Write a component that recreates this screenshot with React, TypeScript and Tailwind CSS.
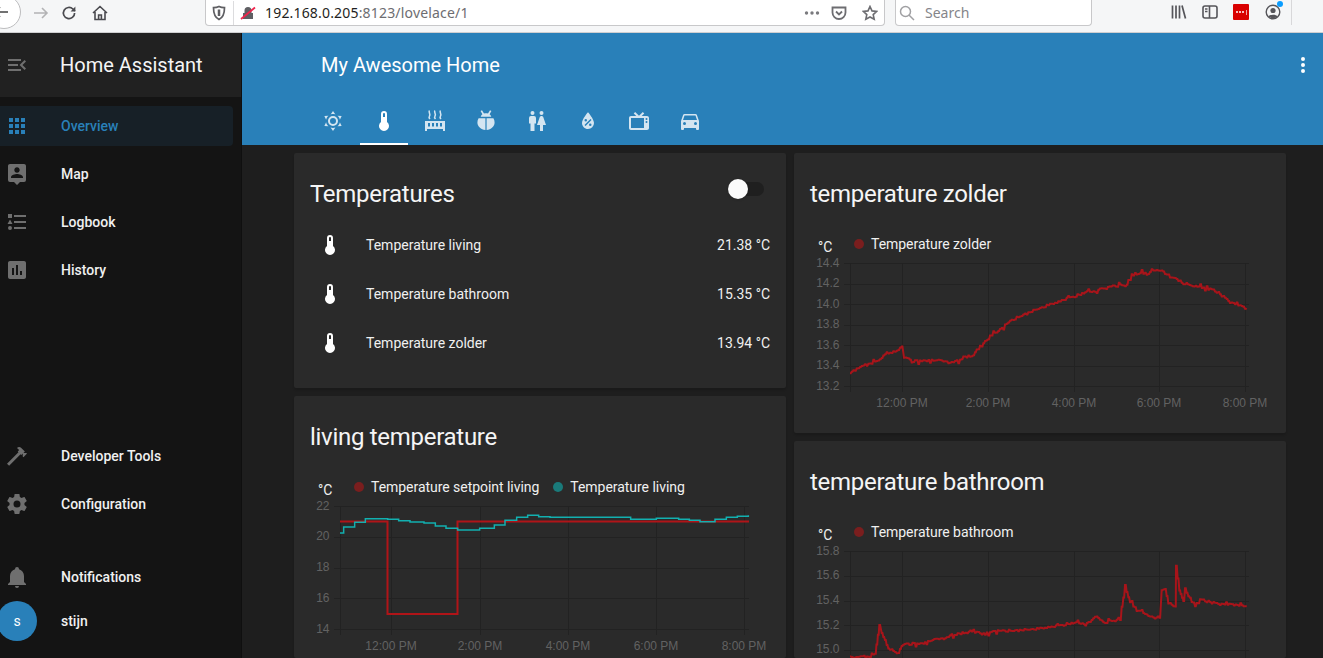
import React from 'react';

/* ======================
   アイコン (mdi paths)
====================== */
const P = {
  menuOpen: 'M21,15.61L19.59,17L14.58,12L19.59,7L21,8.39L17.44,12L21,15.61M3,6H16V8H3V6M3,13V11H13V13H3M3,18V16H16V18H3Z',
  apps: 'M16,20H20V16H16M16,14H20V10H16M10,8H14V4H10M16,8H20V4H16M10,14H14V10H10M4,14H8V10H4M4,20H8V16H4M10,20H14V16H10M4,8H8V4H4V8Z',
  map: 'M19,2H5C3.89,2 3,2.89 3,4V18A2,2 0 0,0 5,20H9L12,23L15,20H19A2,2 0 0,0 21,18V4C21,2.89 20.1,2 19,2M18,16H6V15.1C6,13.1 10,12 12,12C14,12 18,13.1 18,15.1M12,5.3C13.5,5.3 14.7,6.5 14.7,8C14.7,9.5 13.5,10.7 12,10.7C10.5,10.7 9.3,9.5 9.3,8C9.3,6.5 10.5,5.3 12,5.3Z',
  logbook: 'M5,9.5L7.5,14H2.5L5,9.5M3,4H7V8H3V4M5,20A2,2 0 0,0 7,18A2,2 0 0,0 5,16A2,2 0 0,0 3,18A2,2 0 0,0 5,20M9,5V7H21V5H9M9,19H21V17H9V19M9,13H21V11H9V13Z',
  history: 'M19 3H5C3.9 3 3 3.9 3 5V19C3 20.1 3.9 21 5 21H19C20.1 21 21 20.1 21 19V5C21 3.9 20.1 3 19 3M9 17H7V10H9V17M13 17H11V7H13V17M17 17H15V13H17V17Z',
  hammer: 'M2 19.63L13.43 8.2L12.72 7.5L14.14 6.07L12 3.89C13.2 2.7 15.09 2.7 16.27 3.89L19.87 7.5L18.45 8.91H21.29L22 9.62L18.45 13.21L17.74 12.5V9.62L16.27 11.04L15.56 10.33L4.13 21.76L2 19.63Z',
  cog: 'M12,15.5A3.5,3.5 0 0,1 8.5,12A3.5,3.5 0 0,1 12,8.5A3.5,3.5 0 0,1 15.5,12A3.5,3.5 0 0,1 12,15.5M19.43,12.97C19.47,12.65 19.5,12.33 19.5,12C19.5,11.67 19.47,11.34 19.43,11L21.54,9.37C21.73,9.22 21.78,8.95 21.66,8.73L19.66,5.27C19.54,5.05 19.27,4.96 19.05,5.05L16.56,6.05C16.04,5.66 15.5,5.32 14.87,5.07L14.5,2.42C14.46,2.18 14.25,2 14,2H10C9.75,2 9.54,2.18 9.5,2.42L9.13,5.07C8.5,5.32 7.96,5.66 7.44,6.05L4.95,5.05C4.73,4.96 4.46,5.05 4.34,5.27L2.34,8.73C2.21,8.95 2.27,9.22 2.46,9.37L4.57,11C4.53,11.34 4.5,11.67 4.5,12C4.5,12.33 4.53,12.65 4.57,12.97L2.46,14.63C2.27,14.78 2.21,15.05 2.34,15.27L4.34,18.73C4.46,18.95 4.73,19.03 4.95,18.95L7.44,17.94C7.96,18.34 8.5,18.68 9.13,18.93L9.5,21.58C9.54,21.82 9.75,22 10,22H14C14.25,22 14.46,21.82 14.5,21.58L14.87,18.93C15.5,18.67 16.04,18.34 16.56,17.94L19.05,18.95C19.27,19.03 19.54,18.95 19.66,18.73L21.66,15.27C21.78,15.05 21.73,14.78 21.54,14.63L19.43,12.97Z',
  bell: 'M21,19V20H3V19L5,17V11C5,7.9 7.03,5.17 10,4.29C10,4.19 10,4.1 10,4A2,2 0 0,1 12,2A2,2 0 0,1 14,4C14,4.1 14,4.19 14,4.29C16.97,5.17 19,7.9 19,11V17L21,19M14,21A2,2 0 0,1 12,23A2,2 0 0,1 10,21',
  dots: 'M12,16A2,2 0 0,1 14,18A2,2 0 0,1 12,20A2,2 0 0,1 10,18A2,2 0 0,1 12,16M12,10A2,2 0 0,1 14,12A2,2 0 0,1 12,14A2,2 0 0,1 10,12A2,2 0 0,1 12,10M12,4A2,2 0 0,1 14,6A2,2 0 0,1 12,8A2,2 0 0,1 10,6A2,2 0 0,1 12,4Z',
  sunny: 'M12,7A5,5 0 0,1 17,12A5,5 0 0,1 12,17A5,5 0 0,1 7,12A5,5 0 0,1 12,7M12,9A3,3 0 0,0 9,12A3,3 0 0,0 12,15A3,3 0 0,0 15,12A3,3 0 0,0 12,9M12,2L14.39,5.42C13.65,5.15 12.84,5 12,5C11.16,5 10.35,5.15 9.61,5.42L12,2M3.34,7L7.5,6.65C6.9,7.16 6.36,7.78 5.94,8.5C5.5,9.24 5.25,10 5.11,10.79L3.34,7M3.36,17L5.12,13.23C5.26,14 5.53,14.78 5.95,15.5C6.37,16.24 6.91,16.86 7.5,17.37L3.36,17M20.65,7L18.88,10.79C18.74,10 18.47,9.23 18.05,8.5C17.63,7.78 17.1,7.15 16.5,6.64L20.65,7M20.64,17L16.5,17.36C17.09,16.85 17.62,16.22 18.04,15.5C18.46,14.77 18.73,14 18.87,13.21L20.64,17M12,22L9.59,18.56C10.33,18.83 11.14,19 12,19C12.82,19 13.63,18.83 14.37,18.56L12,22Z',
  thermometer: 'M15 13V5A3 3 0 0 0 9 5V13A5 5 0 1 0 15 13M12 4A1 1 0 0 1 13 5V8H11V5A1 1 0 0 1 12 4Z',
  radiator: 'M2 12H22V22H20V20H4V22H2ZM5 14V17.5H7V14ZM9 14V17.5H11V14ZM13 14V17.5H15V14ZM17 14V17.5H19V14Z',
  ladybug: 'M6.6 2L8 1.2L10 4.6C10.6 4.4 11.3 4.3 12 4.3S13.4 4.4 14 4.6L16 1.2L17.4 2L15.6 5.2C16.4 5.8 17 6.7 17.3 7.8H6.7C7 6.7 7.6 5.8 8.4 5.2ZM11.4 9.2V21C7 20.7 3.4 17.6 3.4 13.6C3.4 12 3.8 10.5 4.6 9.2ZM12.6 9.2H19.4C20.2 10.5 20.6 12 20.6 13.6C20.6 17.6 17 20.7 12.6 21Z',
  people: 'M7.5,2A2,2 0 0,1 9.5,4A2,2 0 0,1 7.5,6A2,2 0 0,1 5.5,4A2,2 0 0,1 7.5,2M6,7H9A2,2 0 0,1 11,9V14.5H9.5V22H5.5V14.5H4V9A2,2 0 0,1 6,7M16.5,2A2,2 0 0,1 18.5,4A2,2 0 0,1 16.5,6A2,2 0 0,1 14.5,4A2,2 0 0,1 16.5,2M15,22V16H12L14.59,8.41C14.84,7.59 15.6,7 16.5,7C17.4,7 18.16,7.59 18.41,8.41L21,16H18V22H15Z',
  water: 'M12,3.25C12,3.25 6,10 6,14C6,17.32 8.69,20 12,20A6,6 0 0,0 18,14C18,10 12,3.25 12,3.25M14.47,9.97L15.53,11.03L9.53,17.03L8.47,15.97M9.75,10A1.25,1.25 0 0,1 11,11.25A1.25,1.25 0 0,1 9.75,12.5A1.25,1.25 0 0,1 8.5,11.25A1.25,1.25 0 0,1 9.75,10M14.25,14.5A1.25,1.25 0 0,1 15.5,15.75A1.25,1.25 0 0,1 14.25,17A1.25,1.25 0 0,1 13,15.75A1.25,1.25 0 0,1 14.25,14.5Z',
  tv: 'M8.16,3L6.75,4.41L9.34,7H4C2.89,7 2,7.89 2,9V19C2,20.11 2.89,21 4,21H20C21.11,21 22,20.11 22,19V9C22,7.89 21.11,7 20,7H14.66L17.25,4.41L15.84,3L12,6.84L8.16,3M4,9H17V19H4V9M19.5,9A1,1 0 0,1 20.5,10A1,1 0 0,1 19.5,11A1,1 0 0,1 18.5,10A1,1 0 0,1 19.5,9M19.5,12A1,1 0 0,1 20.5,13A1,1 0 0,1 19.5,14A1,1 0 0,1 18.5,13A1,1 0 0,1 19.5,12Z',
  car: 'M5,11L6.5,6.5H17.5L19,11M17.5,16A1.5,1.5 0 0,1 16,14.5A1.5,1.5 0 0,1 17.5,13A1.5,1.5 0 0,1 19,14.5A1.5,1.5 0 0,1 17.5,16M6.5,16A1.5,1.5 0 0,1 5,14.5A1.5,1.5 0 0,1 6.5,13A1.5,1.5 0 0,1 8,14.5A1.5,1.5 0 0,1 6.5,16M18.92,6C18.72,5.42 18.16,5 17.5,5H6.5C5.84,5 5.28,5.42 5.08,6L3,12V20A1,1 0 0,0 4,21H5A1,1 0 0,0 6,20V19H18V20A1,1 0 0,0 19,21H20A1,1 0 0,0 21,20V12L18.92,6Z',
};

const Icon: React.FC<{ d: string; className?: string }> = ({ d, className }) => (
  <svg viewBox="0 0 24 24" className={`h-6 w-6 shrink-0 ${className ?? ''}`} fill="currentColor">
    <path d={d} fillRule="evenodd" />
  </svg>
);

/* ======================
   ブラウザのツールバー
====================== */
const BrowserBar: React.FC = () => (
  <div className="flex h-[33px] shrink-0 items-start overflow-hidden border-b border-[#cfcfd1] bg-[#f5f6f7] font-['Noto_Sans',sans-serif]">
    <div className="-ml-[13px] -mt-[5px] flex h-[34px] w-[34px] shrink-0 items-center justify-center rounded-full border border-[#bdbdbf] bg-white">
      <svg viewBox="0 0 16 16" className="ml-[-7px] h-4 w-4" fill="none" stroke="#444" strokeWidth="1.6">
        <path d="M15 8H2M7 3L2 8l5 5" />
      </svg>
    </div>
    <div className="flex h-[25px] w-[34px] items-center justify-center pl-[6px]">
      <svg viewBox="0 0 16 16" className="h-4 w-4" fill="none" stroke="#b3b3b5" strokeWidth="1.6">
        <path d="M1 8h13M9 3l5 5-5 5" />
      </svg>
    </div>
    <div className="flex h-[25px] w-[28px] items-center justify-center">
      <svg viewBox="0 0 16 16" className="h-4 w-4" fill="none" stroke="#4a4a4f" strokeWidth="1.7">
        <path d="M13.6 8a5.6 5.6 0 1 1-1.7-4L14 6" />
        <path d="M14.4 1.6V6.4H9.6" fill="#4a4a4f" stroke="none" />
      </svg>
    </div>
    <div className="flex h-[25px] w-[34px] items-center justify-center">
      <svg viewBox="0 0 16 16" className="h-4 w-4" fill="none" stroke="#4a4a4f" strokeWidth="1.6">
        <path d="M1 8l7-6.5L15 8M3 7v7.5h10V7M6.6 14.5V10h2.8v4.5" />
      </svg>
    </div>
    {/* URL欄 */}
    <div className="ml-[88px] flex h-[26px] w-[680px] shrink-0 items-center rounded-b-[4px] border border-t-0 border-[#c8c8ca] bg-white">
      <svg viewBox="0 0 16 16" className="ml-[5px] h-4 w-4" fill="none" stroke="#5f5f63" strokeWidth="1.7">
        <path d="M8 1.5c2 1 4 1.2 5.5 1.2 0 6-1.5 9.8-5.5 11.8-4-2-5.5-5.8-5.5-11.8 1.5 0 3.5-.2 5.5-1.2Z" />
        <path d="M8 4.5v6.5" strokeWidth="2.5" />
      </svg>
      <div className="ml-[6px] h-[24px] w-px bg-[#dcdcde]" />
      <svg viewBox="0 0 16 16" className="ml-[6px] h-[16px] w-[16px]">
        <path d="M3 14V8h1.5V5.5a3.5 3.5 0 0 1 7 0V8H13v6Z" fill="#5f5f63" />
        <path d="M1 14L15 2.5" stroke="#f0244c" strokeWidth="1.7" />
      </svg>
      <div className="ml-[9px] text-[14px] tracking-[0.18px] text-[#6d6d71]">
        <span className="text-[#1f1f22]">192.168.0.205</span>:8123/lovelace/1
      </div>
      <div className="ml-auto flex items-center">
        <svg viewBox="0 0 16 16" className="h-4 w-4" fill="#7a7a7e">
          <circle cx="2.5" cy="8" r="1.7" />
          <circle cx="8" cy="8" r="1.7" />
          <circle cx="13.5" cy="8" r="1.7" />
        </svg>
        <svg viewBox="0 0 16 16" className="ml-[11px] h-4 w-4" fill="none" stroke="#6d6d71" strokeWidth="1.8">
          <path d="M1.5 2.5h13v5a6.5 6.5 0 0 1-13 0Z" />
          <path d="M5 6.5l3 3 3-3" />
        </svg>
        <svg viewBox="0 0 16 16" className="ml-[15px] mr-[6px] h-4 w-4" fill="none" stroke="#6d6d71" strokeWidth="1.6">
          <path d="M8 1.5l2 4.4 4.7.5-3.5 3.2 1 4.7L8 12l-4.2 2.3 1-4.7L1.3 6.4 6 5.9Z" />
        </svg>
      </div>
    </div>
    <div className="ml-[10px] flex h-[26px] w-[197px] shrink-0 items-center rounded-b-[4px] border border-t-0 border-[#c8c8ca] bg-white">
      <svg viewBox="0 0 16 16" className="ml-[3px] h-4 w-4" fill="none" stroke="#a0a0a3" strokeWidth="1.5">
        <circle cx="6.5" cy="6.5" r="5" />
        <path d="M10 10l5 5" />
      </svg>
      <span className="ml-[10px] text-[14px] text-[#85858a]">Search</span>
    </div>
    <div className="ml-[79px] flex h-[24px] items-center">
      <svg viewBox="0 0 16 16" className="h-4 w-4" fill="none" stroke="#55555a" strokeWidth="1.7">
        <path d="M1.5 1.5v13M5 1.5v13M8.5 1.5v13M11 1.5l3.5 13" />
      </svg>
      <svg viewBox="0 0 16 16" className="ml-[15px] h-4 w-4" fill="none" stroke="#55555a" strokeWidth="1.6">
        <rect x="1" y="2" width="14" height="12" rx="2" />
        <path d="M7.5 2v12M3 5h2.5M3 7.5h2.5" />
      </svg>
      <div className="ml-[15px] flex h-[16px] w-[16px] items-center justify-center gap-[1px] rounded-[1px] bg-[#d90000]">
        <i className="h-[2px] w-[2px] rounded-full bg-white" />
        <i className="h-[2px] w-[2px] rounded-full bg-white" />
        <i className="h-[2px] w-[2px] rounded-full bg-white" />
        <i className="ml-[1px] h-[5px] w-px bg-[#f3a0a0]" />
      </div>
      <div className="relative ml-[16px] h-4 w-4">
        <svg viewBox="0 0 16 16" className="h-4 w-4" fill="#55555a">
          <circle cx="8" cy="8" r="6.8" fill="none" stroke="#55555a" strokeWidth="1.4" />
          <circle cx="8" cy="6.5" r="2.6" />
          <path d="M3.5 12.5c1-2.5 8-2.5 9 0-2 2-7 2-9 0Z" />
        </svg>
        <span className="absolute -right-[2px] -top-[3px] h-[6px] w-[6px] rounded-full bg-[#0a9dff]" />
      </div>
      <div className="ml-[10px] h-[26px] w-px bg-[#d8d8da]" />
    </div>
  </div>
);

/* ======================
   サイドバー
====================== */
const NavItem: React.FC<{ d: string; label: string; active?: boolean }> = ({ d, label, active }) => (
  <div className={`flex h-10 items-center rounded-r-[4px] pl-[5px] ${active ? 'bg-[#172027]' : ''}`}>
    <Icon d={d} className={active ? 'text-[#2980b9]' : 'text-[#6f6f6f]'} />
    <span className={`ml-8 text-[14px] font-medium ${active ? 'text-[#2980b9]' : 'text-[#f0f0f0]'}`}>{label}</span>
  </div>
);

const Sidebar: React.FC = () => (
  <aside className="flex w-[242px] shrink-0 flex-col border-r border-[#0f0f0f] bg-[#141414]">
    <div className="flex h-[64px] items-center bg-[#212121] pl-[5px]">
      <Icon d={P.menuOpen} className="text-[#6f6f6f]" />
      <span className="ml-[31px] text-[20px] text-[#f5f5f5]">Home Assistant</span>
    </div>
    <nav className="mr-2 mt-[9px] flex flex-col gap-2">
      <NavItem d={P.apps} label="Overview" active />
      <NavItem d={P.map} label="Map" />
      <NavItem d={P.logbook} label="Logbook" />
      <NavItem d={P.history} label="History" />
    </nav>
    <nav className="mr-2 mt-[146px] flex flex-col gap-2">
      <NavItem d={P.hammer} label="Developer Tools" />
      <NavItem d={P.cog} label="Configuration" />
    </nav>
    <div className="mr-2 mt-[33px]">
      <NavItem d={P.bell} label="Notifications" />
    </div>
    <div className="mt-1 flex h-10 items-center">
      <div className="-ml-[3px] flex h-10 w-10 items-center justify-center rounded-full bg-[#2980b9] text-[14px] text-white">s</div>
      <span className="ml-6 text-[14px] font-medium text-[#f0f0f0]">stijn</span>
    </div>
  </aside>
);

/* ======================
   ヘッダー
====================== */
const tabs = [P.sunny, P.thermometer, P.radiator, P.ladybug, P.people, P.water, P.tv, P.car];

const RadiatorSteam: React.FC = () => (
  <path
    d="M6.5 1.5c-1.5 1.7 1.5 3.6 0 5.5c-.5.8-.5 2 .5 3M12 1.5c-1.5 1.7 1.5 3.6 0 5.5c-.5.8-.5 2 .5 3M17.5 1.5c-1.5 1.7 1.5 3.6 0 5.5c-.5.8-.5 2 .5 3"
    fill="none"
    stroke="currentColor"
    strokeWidth="1.5"
  />
);

const Header: React.FC = () => (
  <header className="h-[112px] shrink-0 bg-[#2980b9] text-white">
    <div className="flex h-[64px] items-center pl-[79px] pr-2">
      <span className="text-[20px]">My Awesome Home</span>
      <Icon d={P.dots} className="ml-auto" />
    </div>
    <div className="ml-[66px] flex h-[48px]">
      {tabs.map((d, i) => (
        <div key={i} className={`flex w-[50.9px] items-center justify-center ${i === 1 ? 'text-white' : 'text-[#d4e5f1]'}`}>
          <div className={`flex h-full w-[48px] items-center justify-center border-b-2 pt-[2px] ${i === 1 ? 'border-white' : 'border-transparent'}`}>
            <svg viewBox="0 0 24 24" className="h-6 w-6" fill="currentColor">
              <path d={d} fillRule="evenodd" />
              {i === 2 && <RadiatorSteam />}
            </svg>
          </div>
        </div>
      ))}
    </div>
  </header>
);

/* ======================
   グラフ
====================== */
type XY = [number, number];

const hash = (n: number) => {
  const s = Math.sin(n * 127.1) * 43758.5453;
  return s - Math.floor(s);
};

// zoom座標 -> 画面座標
const toScreen = (pts: XY[], ox: number, oy: number): XY[] => pts.map(([x, y]) => [x / 3 + ox, y / 3 + oy]);

// センサーのノイズっぽい線
const noisy = (pts: XY[], amp: number): XY[] => {
  const out: XY[] = [];
  let k = 0;
  for (let i = 0; i < pts.length - 1; i++) {
    const [x0, y0] = pts[i];
    const [x1, y1] = pts[i + 1];
    const n = Math.max(1, Math.round((x1 - x0) / 1.6));
    for (let j = 0; j < n; j++) {
      const t = j / n;
      k++;
      const r = hash(k);
      const jitter = r > 0.78 ? (hash(k + 999) - 0.5) * amp * 2.2 : (r - 0.39) * amp;
      const x = x0 + (x1 - x0) * t;
      out.push([x, y0 + (y1 - y0) * t + jitter]);
      out.push([x + 0.8, y0 + (y1 - y0) * t + jitter]);
    }
  }
  out.push(pts[pts.length - 1]);
  return out;
};

const line = (pts: XY[]) => pts.map(p => p.join(',')).join(' ');

const livingTemp = toScreen(
  [[120, 189], [131, 189], [131, 171], [164, 171], [164, 157], [196, 157], [196, 146], [263, 146], [263, 148], [296, 148], [296, 152], [330, 152], [330, 156], [372, 156], [372, 159], [406, 159], [406, 168], [438, 168], [438, 175], [473, 175], [473, 180], [539, 180], [539, 175], [583, 175], [583, 165], [615, 165], [615, 151], [650, 151], [650, 142], [683, 142], [683, 136], [716, 136], [716, 140], [750, 140], [750, 142], [992, 142], [992, 148], [1069, 148], [1069, 145], [1136, 145], [1136, 148], [1168, 148], [1168, 151], [1200, 151], [1200, 155], [1245, 155], [1245, 148], [1279, 148], [1279, 142], [1312, 142], [1312, 139], [1345, 139], [1345, 136]],
  300, 470
);
const livingSet: XY[] = [[340, 521.5], [387.5, 521.5], [387.5, 614], [457.5, 614], [457.5, 521.5], [749, 521.5]];

const zolder = noisy(toScreen(
  [[150, 430], [160, 418], [190, 408], [230, 392], [260, 370], [285, 365], [305, 350], [312, 380], [335, 395], [370, 390], [420, 392], [470, 395], [495, 380], [515, 378], [545, 345], [570, 320], [605, 295], [635, 270], [665, 255], [715, 235], [770, 218], [800, 205], [860, 188], [900, 178], [980, 163], [995, 135], [1020, 128], [1045, 132], [1060, 120], [1075, 118], [1115, 142], [1150, 160], [1210, 172], [1250, 185], [1290, 215], [1340, 238]],
  800, 230
), 3);

const bathroom = noisy(toScreen(
  [[150, 440], [210, 440], [225, 430], [238, 342], [245, 370], [265, 415], [295, 430], [305, 405], [370, 398], [440, 380], [520, 362], [565, 378], [570, 365], [650, 360], [730, 355], [800, 342], [870, 338], [885, 318], [910, 340], [960, 325], [975, 228], [990, 275], [1010, 300], [1040, 312], [1060, 325], [1078, 320], [1085, 240], [1095, 240], [1105, 280], [1125, 288], [1128, 170], [1138, 240], [1150, 270], [1155, 235], [1170, 270], [1190, 285], [1200, 270], [1250, 280], [1340, 290]],
  800, 510
), 2.8);

type Chart = {
  left: number;
  top: number;
  height: number;
  plotLeft: number;
  plotRight: number;
  yTicks: { label: string; y: number }[];
  xTicks: { label: string; x: number }[];
  tickY?: number;
  axisBottom?: number;
  series: { pts: XY[]; color: string; width: number }[];
};

const LineChart: React.FC<{ c: Chart }> = ({ c }) => {
  const last = c.yTicks[c.yTicks.length - 1].y;
  const top = c.yTicks[0].y;
  const bottom = c.axisBottom ?? last + 6;
  return (
    <svg
      viewBox={`${c.left} ${c.top} 492 ${c.height}`}
      width={492}
      height={c.height}
      className="block font-['Liberation_Sans',sans-serif]"
    >
      {c.yTicks.map(t => (
        <g key={t.label}>
          <line x1={c.plotLeft - 6} x2={c.plotRight} y1={Math.round(t.y) + 0.5} y2={Math.round(t.y) + 0.5} stroke="#222222" />
          <text x={c.plotLeft - 10.5} y={t.y + 3.5} textAnchor="end" fontSize="12" fill="#626262">{t.label}</text>
        </g>
      ))}
      <line x1={c.plotLeft + 0.5} x2={c.plotLeft + 0.5} y1={top} y2={bottom} stroke="#222222" />
      {c.xTicks.map(t => (
        <g key={t.label}>
          <line x1={t.x + 0.5} x2={t.x + 0.5} y1={top} y2={bottom} stroke="#222222" />
          {c.tickY !== undefined && (
            <text x={t.x} y={c.tickY} textAnchor="middle" fontSize="12" fill="#626262">{t.label}</text>
          )}
        </g>
      ))}
      {c.series.map((s, i) => (
        <polyline key={i} points={line(s.pts)} fill="none" stroke={s.color} strokeWidth={s.width} />
      ))}
    </svg>
  );
};

const Legend: React.FC<{ items: { label: string; color: string }[] }> = ({ items }) => (
  <div className="flex h-[28px] items-center pl-6 pt-[10px] text-[14px] text-[#f0f0f0]">
    <span className="mt-[6px] w-[36px]">°C</span>
    {items.map(it => (
      <div key={it.label} className="mr-[14px] flex items-center tracking-[-0.04px]">
        <span className={`mr-[7px] h-[10px] w-[10px] rounded-full ${it.color}`} />
        {it.label}
      </div>
    ))}
  </div>
);

const Card: React.FC<{ title: string; className?: string; children: React.ReactNode }> = ({ title, className, children }) => (
  <section className={`w-[492px] shrink-0 overflow-hidden rounded-[2px] bg-[#2a2a2a] shadow-[0_2px_2px_rgba(0,0,0,0.14)] ${className ?? ''}`}>
    <h2 className="px-4 pb-[15px] pt-[25px] text-[24px] leading-[32px] tracking-[-0.288px] text-[#f5f5f5]">{title}</h2>
    {children}
  </section>
);

const xLabels = ['12:00 PM', '2:00 PM', '4:00 PM', '6:00 PM', '8:00 PM'];

const livingChart: Chart = {
  left: 294, top: 496, height: 162, plotLeft: 340, plotRight: 749, tickY: 650,
  yTicks: ['22', '20', '18', '16', '14'].map((label, i) => ({ label, y: 506 + i * 30.75 })),
  xTicks: xLabels.map((label, i) => ({ label, x: [391, 480, 568, 656, 744][i] })),
  series: [
    { pts: livingSet, color: '#b01418', width: 2 },
    { pts: livingTemp, color: '#12b0b0', width: 1.5 },
  ],
};

const zolderChart: Chart = {
  left: 794, top: 253, height: 180, plotLeft: 850, plotRight: 1249, tickY: 407,
  yTicks: ['14.4', '14.2', '14.0', '13.8', '13.6', '13.4', '13.2'].map((label, i) => ({ label, y: 263.3 + i * 20.45 })),
  xTicks: xLabels.map((label, i) => ({ label, x: [902, 988, 1074, 1159, 1245][i] })),
  series: [{ pts: zolder, color: '#a8141a', width: 2 }],
};

// x軸ラベルは画面の外なので描かない
const bathroomChart: Chart = {
  left: 794, top: 541, height: 117, plotLeft: 850, plotRight: 1249, axisBottom: 658,
  yTicks: ['15.8', '15.6', '15.4', '15.2', '15.0'].map((label, i) => ({ label, y: 551.3 + i * 24.6 })),
  xTicks: xLabels.map((label, i) => ({ label, x: [902, 988, 1074, 1159, 1245][i] })),
  series: [{ pts: bathroom, color: '#a8141a', width: 2 }],
};

/* ======================
   温度カード
====================== */
const sensors = [
  { name: 'Temperature living', value: '21.38 °C' },
  { name: 'Temperature bathroom', value: '15.35 °C' },
  { name: 'Temperature zolder', value: '13.94 °C' },
];

const Temperatures: React.FC = () => (
  <section className="h-[235px] w-[492px] shrink-0 rounded-[2px] bg-[#2a2a2a] shadow-[0_2px_2px_rgba(0,0,0,0.14)]">
    <div className="flex items-start justify-between pl-4 pr-[22px] pt-6">
      <h2 className="mt-px h-[31px] text-[24px] leading-[32px] tracking-[-0.288px] text-[#f5f5f5]">Temperatures</h2>
      <div className="relative mt-[5px] h-[14px] w-[36px] rounded-full bg-[#1f1f1f]">
        <span className="absolute -top-[3px] left-0 h-5 w-5 rounded-full bg-[#fafafa] shadow" />
      </div>
    </div>
    <ul className="mt-[16px] flex flex-col gap-[9px] pl-6 pr-4">
      {sensors.map(s => (
        <li key={s.name} className="flex h-10 items-center text-[14px] text-[#f0f0f0]">
          <Icon d={P.thermometer} className="text-white" />
          <span className="ml-6">{s.name}</span>
          <span className="ml-auto">{s.value}</span>
        </li>
      ))}
    </ul>
  </section>
);

/* ======================
   メイン
====================== */
const App: React.FC = () => (
  <div className="flex h-[658px] w-[1323px] flex-col overflow-hidden bg-[#1e1e1e] font-['Roboto',sans-serif]">
    <BrowserBar />
    <div className="flex min-h-0 flex-1">
      <Sidebar />
      <main className="flex min-w-0 flex-1 flex-col">
        <Header />
        <div className="flex gap-2 pl-[52px] pt-2">
          <div className="flex flex-col gap-2">
            <Temperatures />
            <Card title="living temperature">
              <Legend
                items={[
                  { label: 'Temperature setpoint living', color: 'bg-[#7a1e1e]' },
                  { label: 'Temperature living', color: 'bg-[#1a7a7a]' },
                ]}
              />
              <LineChart c={livingChart} />
            </Card>
          </div>
          <div className="flex flex-col gap-2">
            <Card title="temperature zolder">
              <Legend items={[{ label: 'Temperature zolder', color: 'bg-[#7a1e1e]' }]} />
              <LineChart c={zolderChart} />
            </Card>
            <Card title="temperature bathroom">
              <Legend items={[{ label: 'Temperature bathroom', color: 'bg-[#7a1e1e]' }]} />
              <LineChart c={bathroomChart} />
            </Card>
          </div>
        </div>
      </main>
    </div>
  </div>
);

export default App;
